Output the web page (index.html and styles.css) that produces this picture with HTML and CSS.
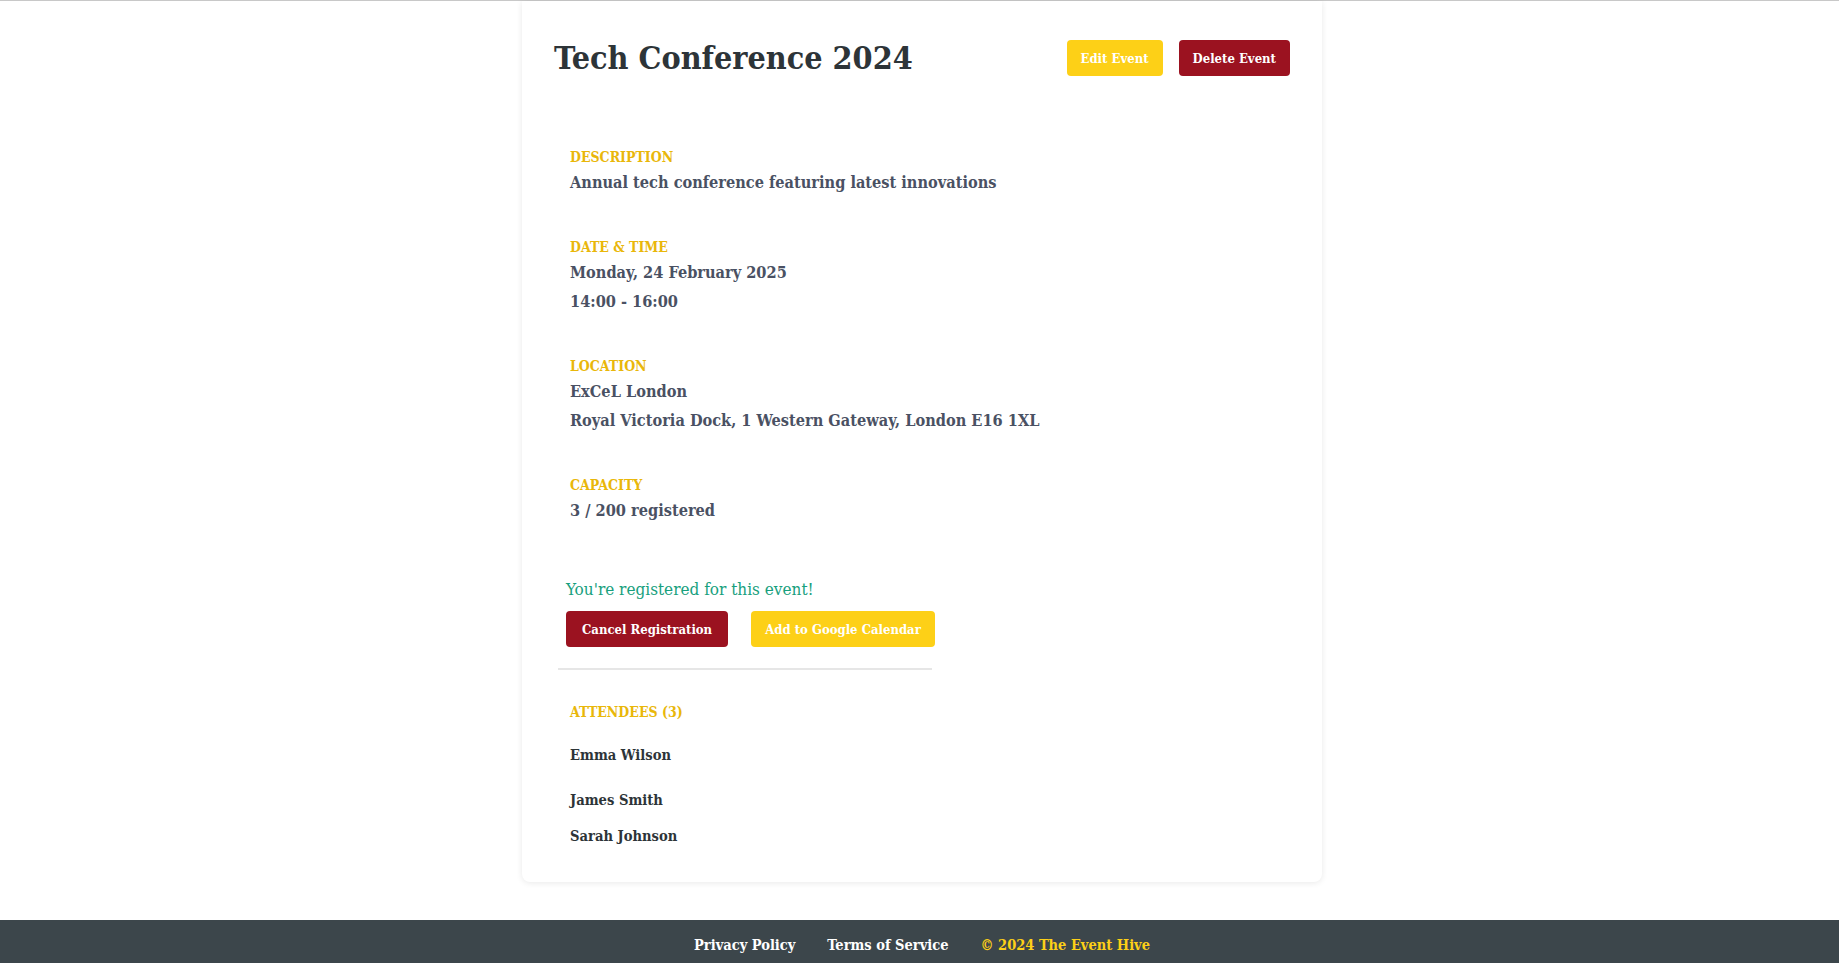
FILE: index.html
```html
<!DOCTYPE html>
<html lang="en">
<head>
<meta charset="utf-8">
<title>Tech Conference 2024</title>
<link rel="stylesheet" href="styles.css">
</head>
<body>
<div class="topbar"></div>
<main class="page">
  <article class="card">
    <header class="card-header">
      <h1 class="title">Tech Conference 2024</h1>
      <div class="actions">
        <button class="btn btn-yellow">Edit Event</button>
        <button class="btn btn-red">Delete Event</button>
      </div>
    </header>

    <div class="details">
      <section class="section">
        <h3 class="label">DESCRIPTION</h3>
        <p class="value">Annual tech conference featuring latest innovations</p>
      </section>
      <section class="section">
        <h3 class="label">DATE &amp; TIME</h3>
        <p class="value">Monday, 24 February 2025</p>
        <p class="value">14:00 - 16:00</p>
      </section>
      <section class="section">
        <h3 class="label">LOCATION</h3>
        <p class="value">ExCeL London</p>
        <p class="value">Royal Victoria Dock, 1 Western Gateway, London E16 1XL</p>
      </section>
      <section class="section">
        <h3 class="label">CAPACITY</h3>
        <p class="value">3 / 200 registered</p>
      </section>
    </div>

    <div class="registration">
      <p class="registered">You're registered for this event!</p>
      <div class="reg-actions">
        <button class="btn btn-red btn-wide">Cancel Registration</button>
        <button class="btn btn-yellow">Add to Google Calendar</button>
      </div>
      <hr class="divider">
    </div>

    <section class="section attendees">
      <h3 class="label">ATTENDEES (3)</h3>
      <ul class="attendee-list">
        <li class="attendee">Emma Wilson</li>
        <li class="attendee">James Smith</li>
        <li class="attendee">Sarah Johnson</li>
      </ul>
    </section>
  </article>
</main>
<footer class="footer">
  <nav class="footer-inner">
    <a class="footer-link" href="#">Privacy Policy</a>
    <a class="footer-link" href="#">Terms of Service</a>
    <span class="copyright">© 2024 The Event Hive</span>
  </nav>
</footer>
</body>
</html>
```

FILE: styles.css
```css
* { box-sizing: border-box; }

html, body {
  margin: 0;
  padding: 0;
  background: #ffffff;
}

body {
  font-family: "DejaVu Serif", "Liberation Serif", serif;
  font-stretch: condensed;
  color: #4a5163;
}

.topbar {
  height: 1px;
  background: #c8c8c8;
}

.page {
  padding-left: 5px;
}

.card {
  width: 800px;
  margin: 0 auto;
  background: #fff;
  border-radius: 0 0 8px 8px;
  box-shadow: 0 1px 6px rgba(0, 0, 0, 0.09);
  padding: 39px 32px 35px 32px;
}

.card-header {
  display: flex;
  align-items: center;
  justify-content: space-between;
  height: 36px;
}

.title {
  margin: 0;
  font-size: 32px;
  line-height: 36px;
  font-weight: 700;
  color: #2d3438;
}

.actions {
  display: flex;
  gap: 16px;
}

.btn {
  font-family: inherit;
  font-stretch: condensed;
  font-weight: 700;
  font-size: 13px;
  color: #ffffff;
  border: none;
  border-radius: 4px;
  height: 36px;
  padding: 0 14px;
  cursor: pointer;
}

.btn-wide {
  padding: 0 16px;
}

.btn-yellow { background: #fdd017; }
.btn-red { background: #9b1220; }

.details {
  margin-top: 71px;
}

.section {
  padding: 0 16px;
  margin-bottom: 40px;
}

.label {
  margin: 0 0 1px 0;
  font-size: 14px;
  line-height: 20px;
  font-weight: 700;
  color: #e9b70a;
}

.value {
  margin: 0;
  font-size: 16.2px;
  line-height: 29px;
  font-weight: 700;
  color: #4a5163;
}

.registration {
  margin-top: 52px;
}

.registered {
  margin: 0 0 10px 12px;
  font-size: 17px;
  line-height: 24px;
  color: #17a07d;
}

.reg-actions {
  display: flex;
  gap: 23px;
  margin-left: 12px;
}

.divider {
  margin: 21px 0 0 4px;
  width: 374px;
  border: none;
  border-top: 2px solid #e6e6e6;
}

.attendees {
  margin-top: 32px;
  margin-bottom: 0;
}

.attendee-list {
  list-style: none;
  margin: 22px 0 0 0;
  padding: 0;
}

.attendee {
  font-size: 14.6px;
  line-height: 22px;
  font-weight: 700;
  color: #2d3438;
}

.attendee:first-child {
  margin-bottom: 23px;
}

.attendee + .attendee + .attendee {
  margin-top: 14px;
}

.footer {
  margin-top: 38px;
  background: #3c464b;
  padding: 14px 0 9px 5px;
}

.footer-inner {
  display: flex;
  justify-content: center;
  gap: 32px;
  font-size: 14.5px;
  line-height: 22px;
  font-weight: 700;
}

.footer-link {
  color: #ffffff;
  text-decoration: none;
}

.copyright {
  color: #fdd017;
}
```
